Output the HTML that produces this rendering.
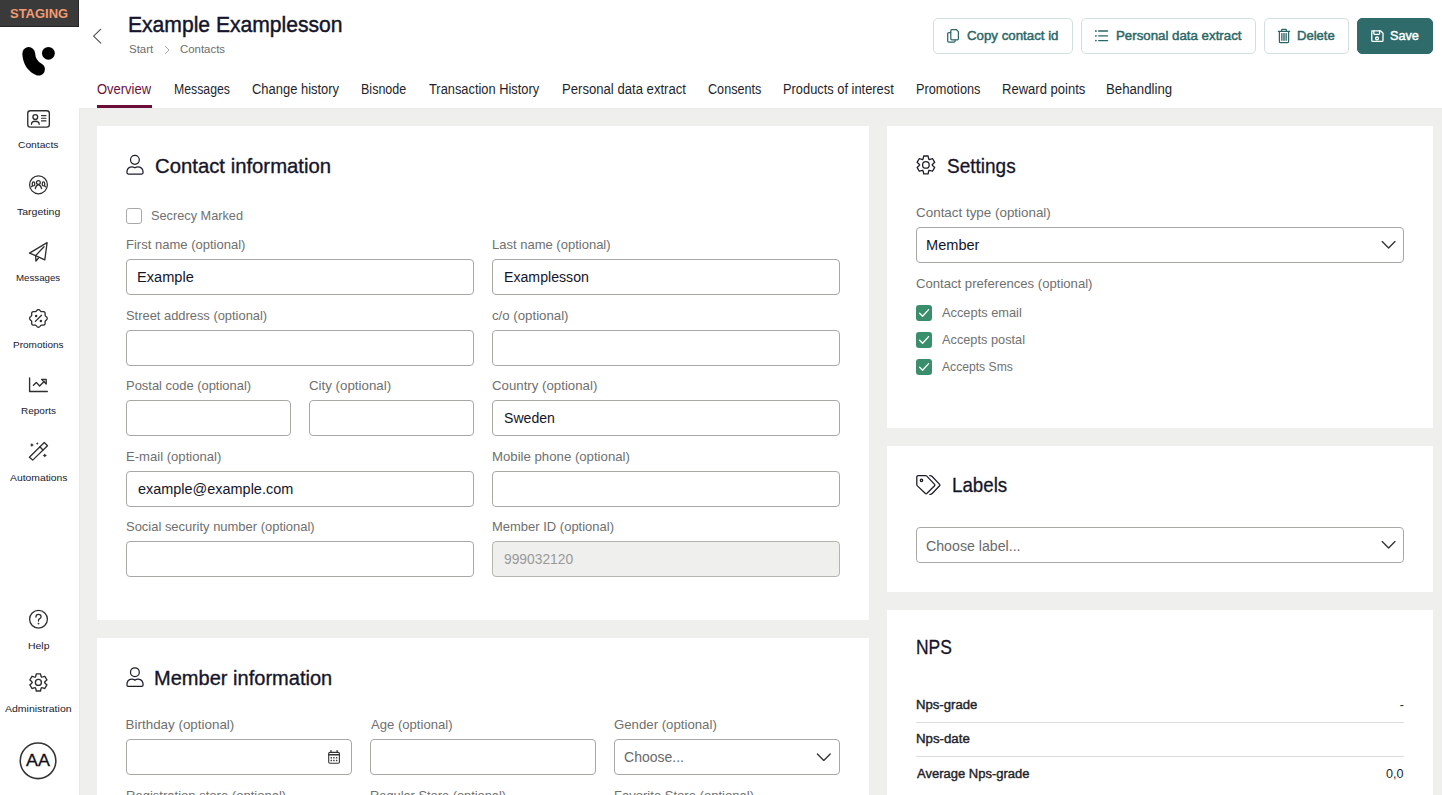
<!DOCTYPE html>
<html><head><meta charset="utf-8">
<style>
*{box-sizing:border-box;margin:0;padding:0}
html,body{width:1442px;height:795px;overflow:hidden;background:#fff;font-family:"Liberation Sans",sans-serif}
.t{position:absolute;white-space:nowrap;transform-origin:0 0}
.b{position:absolute}
.card{position:absolute;background:#fff}
.inp{position:absolute;height:36px;border:1px solid #a8a8a4;border-radius:4px;background:#fff}
.btn{position:absolute;top:18px;height:36px;border:1px solid #d3dfde;border-radius:5px;background:#fff}
.cb{position:absolute;width:16px;height:16px;border-radius:3px;background:#3a8e6c}
</style></head><body>
<div class="b" style="left:0;top:0;width:79px;height:27px;background:#3a3a3a;border-right:1px solid #252525;border-bottom:1px solid #252525"></div>
<div class="b" style="left:79px;top:108px;width:1363px;height:687px;background:#efefed;border-left:1px solid #eaeae8;border-top:1px solid #eaeae8"></div>
<div class="b" style="left:97px;top:105px;width:55px;height:3px;background:#6b0f3a"></div>
<div class="btn" style="left:933px;width:140px"></div>
<div class="btn" style="left:1081px;width:175px"></div>
<div class="btn" style="left:1264px;width:85px"></div>
<div class="btn" style="left:1357px;width:76px;background:#2f6b6a;border-color:#2f6b6a"></div>

<!-- cards -->
<div class="card" style="left:97px;top:126px;width:772px;height:494px"></div>
<div class="card" style="left:97px;top:638px;width:772px;height:200px"></div>
<div class="card" style="left:887px;top:126px;width:546px;height:302px"></div>
<div class="card" style="left:887px;top:446px;width:546px;height:146px"></div>
<div class="card" style="left:887px;top:610px;width:546px;height:200px"></div>
<!-- contact info inputs -->
<div class="b" style="left:126px;top:208px;width:16px;height:16px;border:1px solid #a8a8a4;border-radius:3px"></div>
<div class="inp" style="left:126px;top:259px;width:348px"></div>
<div class="inp" style="left:492px;top:259px;width:348px"></div>
<div class="inp" style="left:126px;top:330px;width:348px"></div>
<div class="inp" style="left:492px;top:330px;width:348px"></div>
<div class="inp" style="left:126px;top:400px;width:165px"></div>
<div class="inp" style="left:309px;top:400px;width:165px"></div>
<div class="inp" style="left:492px;top:400px;width:348px"></div>
<div class="inp" style="left:126px;top:471px;width:348px"></div>
<div class="inp" style="left:492px;top:471px;width:348px"></div>
<div class="inp" style="left:126px;top:541px;width:348px"></div>
<div class="inp" style="left:492px;top:541px;width:348px;background:#efefed;border-color:#b4b4b0"></div>
<!-- member info -->
<div class="inp" style="left:126px;top:739px;width:226px"></div>
<div class="inp" style="left:370px;top:739px;width:226px"></div>
<div class="inp" style="left:614px;top:739px;width:226px"></div>
<!-- settings -->
<div class="inp" style="left:916px;top:227px;width:488px"></div>
<div class="cb" style="left:916px;top:305px"></div>
<div class="cb" style="left:916px;top:332px"></div>
<div class="cb" style="left:916px;top:359px"></div>
<!-- labels -->
<div class="inp" style="left:916px;top:527px;width:488px"></div>
<!-- nps lines -->
<div class="b" style="left:916px;top:722px;width:488px;height:1px;background:#dcdcdc"></div>
<div class="b" style="left:916px;top:756px;width:488px;height:1px;background:#dcdcdc"></div>

<div class="t" style="left:9.55px;top:8.00px;font-size:12.8px;line-height:12.8px;color:#f59a72;font-weight:700;transform:scaleX(1.0129);">STAGING</div><div class="t" style="left:128.01px;top:13.00px;font-size:22.8px;line-height:22.8px;color:#14142a;-webkit-text-stroke:0.45px #14142a;transform:scaleX(0.9253);">Example Examplesson</div><div class="t" style="left:129.33px;top:44.00px;font-size:11px;line-height:11px;color:#6d6d6d;transform:scaleX(1.0445);">Start</div><div class="t" style="left:179.84px;top:44.00px;font-size:11px;line-height:11px;color:#6d6d6d;transform:scaleX(1.0381);">Contacts</div><div class="t" style="left:97.06px;top:82.00px;font-size:14px;line-height:14px;color:#6b0f3a;transform:scaleX(0.9259);">Overview</div><div class="t" style="left:174.01px;top:82.00px;font-size:14px;line-height:14px;color:#1f1f2b;transform:scaleX(0.8764);">Messages</div><div class="t" style="left:251.91px;top:82.00px;font-size:14px;line-height:14px;color:#1f1f2b;transform:scaleX(0.9244);">Change history</div><div class="t" style="left:361.18px;top:82.00px;font-size:14px;line-height:14px;color:#1f1f2b;transform:scaleX(0.8943);">Bisnode</div><div class="t" style="left:429.37px;top:82.00px;font-size:14px;line-height:14px;color:#1f1f2b;transform:scaleX(0.9177);">Transaction History</div><div class="t" style="left:561.53px;top:82.00px;font-size:14px;line-height:14px;color:#1f1f2b;transform:scaleX(0.9369);">Personal data extract</div><div class="t" style="left:708.13px;top:82.00px;font-size:14px;line-height:14px;color:#1f1f2b;transform:scaleX(0.9018);">Consents</div><div class="t" style="left:782.56px;top:82.00px;font-size:14px;line-height:14px;color:#1f1f2b;transform:scaleX(0.9180);">Products of interest</div><div class="t" style="left:915.76px;top:82.00px;font-size:14px;line-height:14px;color:#1f1f2b;transform:scaleX(0.9106);">Promotions</div><div class="t" style="left:1001.64px;top:82.00px;font-size:14px;line-height:14px;color:#1f1f2b;transform:scaleX(0.9317);">Reward points</div><div class="t" style="left:1106.12px;top:82.00px;font-size:14px;line-height:14px;color:#1f1f2b;transform:scaleX(0.9441);">Behandling</div><div class="t" style="left:966.81px;top:30.00px;font-size:12.6px;line-height:12.6px;color:#2b6766;-webkit-text-stroke:0.45px #2b6766;transform:scaleX(1.0540);">Copy contact id</div><div class="t" style="left:1115.72px;top:30.00px;font-size:12.6px;line-height:12.6px;color:#2b6766;-webkit-text-stroke:0.45px #2b6766;transform:scaleX(1.0543);">Personal data extract</div><div class="t" style="left:1296.73px;top:30.00px;font-size:12.6px;line-height:12.6px;color:#2b6766;-webkit-text-stroke:0.45px #2b6766;transform:scaleX(1.0348);">Delete</div><div class="t" style="left:1389.79px;top:30.00px;font-size:12.6px;line-height:12.6px;color:#ffffff;-webkit-text-stroke:0.45px #ffffff;transform:scaleX(1.0068);">Save</div><div class="t" style="left:18.27px;top:140.00px;font-size:9.8px;line-height:9.8px;color:#20202c;transform:scaleX(1.0464);">Contacts</div><div class="t" style="left:17.00px;top:207.00px;font-size:9.8px;line-height:9.8px;color:#20202c;transform:scaleX(1.0733);">Targeting</div><div class="t" style="left:16.34px;top:273.00px;font-size:9.8px;line-height:9.8px;color:#20202c;transform:scaleX(0.9889);">Messages</div><div class="t" style="left:13.32px;top:340.00px;font-size:9.8px;line-height:9.8px;color:#20202c;transform:scaleX(1.0209);">Promotions</div><div class="t" style="left:20.82px;top:406.00px;font-size:9.8px;line-height:9.8px;color:#20202c;transform:scaleX(1.0207);">Reports</div><div class="t" style="left:9.88px;top:473.00px;font-size:9.8px;line-height:9.8px;color:#20202c;transform:scaleX(1.0561);">Automations</div><div class="t" style="left:27.58px;top:641.00px;font-size:9.8px;line-height:9.8px;color:#20202c;transform:scaleX(1.0636);">Help</div><div class="t" style="left:5.38px;top:704.00px;font-size:9.8px;line-height:9.8px;color:#20202c;transform:scaleX(1.0723);">Administration</div><div class="t" style="left:26.49px;top:752.00px;font-size:17px;line-height:17px;color:#111118;-webkit-text-stroke:0.3px #111118;transform:scaleX(1.0530);">AA</div><div class="t" style="left:154.50px;top:155.00px;font-size:21px;line-height:21px;color:#15152a;-webkit-text-stroke:0.35px #15152a;transform:scaleX(0.9670);">Contact information</div><div class="t" style="left:150.90px;top:209.00px;font-size:13.6px;line-height:13.6px;color:#717171;transform:scaleX(0.9366);">Secrecy Marked</div><div class="t" style="left:125.74px;top:238.00px;font-size:13.4px;line-height:13.4px;color:#6f6f6f;transform:scaleX(0.9726);">First name (optional)</div><div class="t" style="left:492.14px;top:238.00px;font-size:13.4px;line-height:13.4px;color:#6f6f6f;transform:scaleX(0.9715);">Last name (optional)</div><div class="t" style="left:126.08px;top:309.00px;font-size:13.4px;line-height:13.4px;color:#6f6f6f;transform:scaleX(0.9625);">Street address (optional)</div><div class="t" style="left:492.38px;top:309.00px;font-size:13.4px;line-height:13.4px;color:#6f6f6f;transform:scaleX(0.9881);">c/o (optional)</div><div class="t" style="left:125.75px;top:379.00px;font-size:13.4px;line-height:13.4px;color:#6f6f6f;transform:scaleX(0.9659);">Postal code (optional)</div><div class="t" style="left:309.19px;top:379.00px;font-size:13.4px;line-height:13.4px;color:#6f6f6f;transform:scaleX(0.9940);">City (optional)</div><div class="t" style="left:492.29px;top:379.00px;font-size:13.4px;line-height:13.4px;color:#6f6f6f;transform:scaleX(0.9893);">Country (optional)</div><div class="t" style="left:125.73px;top:450.00px;font-size:13.4px;line-height:13.4px;color:#6f6f6f;transform:scaleX(0.9775);">E-mail (optional)</div><div class="t" style="left:491.83px;top:450.00px;font-size:13.4px;line-height:13.4px;color:#6f6f6f;transform:scaleX(0.9853);">Mobile phone (optional)</div><div class="t" style="left:126.07px;top:520.00px;font-size:13.4px;line-height:13.4px;color:#6f6f6f;transform:scaleX(0.9676);">Social security number (optional)</div><div class="t" style="left:491.84px;top:520.00px;font-size:13.4px;line-height:13.4px;color:#6f6f6f;transform:scaleX(0.9701);">Member ID (optional)</div><div class="t" style="left:137.24px;top:269.00px;font-size:15.4px;line-height:15.4px;color:#15152a;transform:scaleX(0.9496);">Example</div><div class="t" style="left:503.98px;top:269.00px;font-size:15.4px;line-height:15.4px;color:#15152a;transform:scaleX(0.9191);">Examplesson</div><div class="t" style="left:503.69px;top:410.00px;font-size:15.4px;line-height:15.4px;color:#15152a;transform:scaleX(0.9154);">Sweden</div><div class="t" style="left:137.55px;top:481.00px;font-size:15.4px;line-height:15.4px;color:#15152a;transform:scaleX(0.9388);">example@example.com</div><div class="t" style="left:503.81px;top:551.00px;font-size:15.4px;line-height:15.4px;color:#9a9a9a;transform:scaleX(0.8978);">999032120</div><div class="t" style="left:153.84px;top:667.00px;font-size:21px;line-height:21px;color:#15152a;-webkit-text-stroke:0.35px #15152a;transform:scaleX(0.9545);">Member information</div><div class="t" style="left:125.61px;top:718.00px;font-size:13.4px;line-height:13.4px;color:#6f6f6f;">Birthday (optional)</div><div class="t" style="left:370.58px;top:718.00px;font-size:13.4px;line-height:13.4px;color:#6f6f6f;transform:scaleX(0.9780);">Age (optional)</div><div class="t" style="left:614.00px;top:718.00px;font-size:13.4px;line-height:13.4px;color:#6f6f6f;transform:scaleX(0.9863);">Gender (optional)</div><div class="t" style="left:623.98px;top:749.00px;font-size:15.4px;line-height:15.4px;color:#6a6a6a;transform:scaleX(0.9111);">Choose...</div><div class="t" style="left:125.64px;top:789.00px;font-size:13.4px;line-height:13.4px;color:#6f6f6f;transform:scaleX(0.9739);">Registration store (optional)</div><div class="t" style="left:369.76px;top:789.00px;font-size:13.4px;line-height:13.4px;color:#6f6f6f;transform:scaleX(0.9570);">Regular Store (optional)</div><div class="t" style="left:613.54px;top:789.00px;font-size:13.4px;line-height:13.4px;color:#6f6f6f;transform:scaleX(0.9746);">Favorite Store (optional)</div><div class="t" style="left:946.50px;top:155.00px;font-size:21px;line-height:21px;color:#15152a;-webkit-text-stroke:0.3px #15152a;transform:scaleX(0.9051);">Settings</div><div class="t" style="left:916.09px;top:206.00px;font-size:13.4px;line-height:13.4px;color:#6f6f6f;">Contact type (optional)</div><div class="t" style="left:925.75px;top:237.00px;font-size:15.4px;line-height:15.4px;color:#15152a;transform:scaleX(0.9467);">Member</div><div class="t" style="left:916.10px;top:277.00px;font-size:13.4px;line-height:13.4px;color:#6f6f6f;transform:scaleX(0.9798);">Contact preferences (optional)</div><div class="t" style="left:941.50px;top:306.00px;font-size:13.6px;line-height:13.6px;color:#717171;transform:scaleX(0.9432);">Accepts email</div><div class="t" style="left:941.50px;top:333.00px;font-size:13.6px;line-height:13.6px;color:#717171;transform:scaleX(0.9389);">Accepts postal</div><div class="t" style="left:941.51px;top:360.00px;font-size:13.6px;line-height:13.6px;color:#717171;transform:scaleX(0.8926);">Accepts Sms</div><div class="t" style="left:951.52px;top:474.00px;font-size:21px;line-height:21px;color:#15152a;-webkit-text-stroke:0.3px #15152a;transform:scaleX(0.8913);">Labels</div><div class="t" style="left:926.27px;top:538.00px;font-size:15.4px;line-height:15.4px;color:#6a6a6a;transform:scaleX(0.9209);">Choose label...</div><div class="t" style="left:915.51px;top:636.00px;font-size:21px;line-height:21px;color:#15152a;-webkit-text-stroke:0.3px #15152a;transform:scaleX(0.8302);">NPS</div><div class="t" style="left:915.99px;top:699.00px;font-size:12.5px;line-height:12.5px;color:#1f1f2a;-webkit-text-stroke:0.4px #1f1f2a;transform:scaleX(1.0508);">Nps-grade</div><div class="t" style="left:915.98px;top:733.00px;font-size:12.5px;line-height:12.5px;color:#1f1f2a;-webkit-text-stroke:0.4px #1f1f2a;transform:scaleX(1.0607);">Nps-date</div><div class="t" style="left:916.93px;top:768.00px;font-size:12.5px;line-height:12.5px;color:#1f1f2a;-webkit-text-stroke:0.4px #1f1f2a;transform:scaleX(1.0404);">Average Nps-grade</div><div class="t" style="left:1399.87px;top:699.00px;font-size:12.5px;line-height:12.5px;color:#1f1f2a;">-</div><div class="t" style="left:1386.16px;top:768.00px;font-size:12.5px;line-height:12.5px;color:#1f1f2a;transform:scaleX(1.0111);">0,0</div>
<svg width="1442" height="795" style="position:absolute;left:0;top:0;pointer-events:none" fill="none" stroke-linecap="round" stroke-linejoin="round">
<path d="M28.7 53.5 Q29.5 65 38.6 69.2" stroke="#000" stroke-width="12.8"/><circle cx="48.4" cy="53.3" r="6.4" fill="#000"/>
<path d="M100.8 29.2 L93.6 36.2 L100.8 43.2" stroke="#4a4a4a" stroke-width="1.05"/>
<path d="M165.5 46.5 L169 50 L165.5 53.5" stroke="#a0a0a0" stroke-width="0.95"/>
<g stroke="#2e2e2e" stroke-width="1.35"><rect x="27.75" y="110.75" width="21.6" height="16.4" rx="2.6"/><circle cx="35.3" cy="117" r="2.4"/><path d="M31.5 124.2 Q31.5 121.2 35.3 121.2 Q39.2 121.2 39.2 124.2"/><path d="M41.5 115.6 H46 M41.5 118.3 H46 M41.5 120.9 H46" stroke-width="1.1"/></g>
<g stroke="#2e2e2e" stroke-width="1.25"><circle cx="38.5" cy="184.85" r="8.9"/><circle cx="38.4" cy="182.4" r="1.9"/><path d="M35.3 188.6 Q36 185.2 38.4 184.6 Q40.8 185.2 41.6 188.6"/><path d="M32.3 185.4 V183.3 Q32.3 181.9 33.5 181.9 Q34.7 181.9 34.7 183.3 V185.2"/><path d="M42.3 185.2 V183.3 Q42.3 181.9 43.5 181.9 Q44.7 181.9 44.7 183.3 V185.4"/><path d="M31.3 186.9 Q32.3 185.6 34.4 185.6 M42.6 185.6 Q44.7 185.6 45.7 186.9" stroke-width="1.1"/></g>
<g stroke="#2e2e2e" stroke-width="1.3"><path d="M47.1 242.6 L29.5 253.1 L35.6 255.6 L44.8 259.9 Z"/><path d="M35.6 255.6 L44 246.8"/><path d="M35.6 255.6 L35.9 261 L38.4 258.2"/></g>
<g stroke="#2e2e2e" stroke-width="1.3"><path d="M47.25 318.40 L47.13 318.97 L46.80 319.51 L46.34 319.98 L45.86 320.40 L45.46 320.79 L45.19 321.21 L45.08 321.70 L45.09 322.26 L45.13 322.90 L45.12 323.56 L44.98 324.17 L44.66 324.66 L44.17 324.98 L43.56 325.12 L42.90 325.13 L42.26 325.09 L41.70 325.08 L41.21 325.19 L40.79 325.46 L40.40 325.86 L39.98 326.34 L39.51 326.80 L38.97 327.13 L38.40 327.25 L37.83 327.13 L37.29 326.80 L36.82 326.34 L36.40 325.86 L36.01 325.46 L35.59 325.19 L35.10 325.08 L34.54 325.09 L33.90 325.13 L33.24 325.12 L32.63 324.98 L32.14 324.66 L31.82 324.17 L31.68 323.56 L31.67 322.90 L31.71 322.26 L31.72 321.70 L31.61 321.21 L31.34 320.79 L30.94 320.40 L30.46 319.98 L30.00 319.51 L29.67 318.97 L29.55 318.40 L29.67 317.83 L30.00 317.29 L30.46 316.82 L30.94 316.40 L31.34 316.01 L31.61 315.59 L31.72 315.10 L31.71 314.54 L31.67 313.90 L31.68 313.24 L31.82 312.63 L32.14 312.14 L32.63 311.82 L33.24 311.68 L33.90 311.67 L34.54 311.71 L35.10 311.72 L35.59 311.61 L36.01 311.34 L36.40 310.94 L36.82 310.46 L37.29 310.00 L37.83 309.67 L38.40 309.55 L38.97 309.67 L39.51 310.00 L39.98 310.46 L40.40 310.94 L40.79 311.34 L41.21 311.61 L41.70 311.72 L42.26 311.71 L42.90 311.67 L43.56 311.68 L44.17 311.82 L44.66 312.14 L44.98 312.63 L45.12 313.24 L45.13 313.90 L45.09 314.54 L45.08 315.10 L45.19 315.59 L45.46 316.01 L45.86 316.40 L46.34 316.82 L46.80 317.29 L47.13 317.83Z"/><path d="M35.4 321.4 L41.5 315.2"/></g><circle cx="36.1" cy="316" r="1.25" fill="#2e2e2e"/><circle cx="40.9" cy="320.9" r="1.25" fill="#2e2e2e"/>
<g stroke="#2e2e2e" stroke-width="1.35"><path d="M29.6 377.8 V391.5 H47.3"/><path d="M33.4 385.3 L36.3 382.4 L39.6 386 L44.3 381.3"/><path d="M41.6 379.4 H46.2 V384.1 Z"/></g>
<g stroke="#2e2e2e" stroke-width="1.3"><path d="M29.4 457.2 L32.7 460.1 L47.5 445.7 L44.3 442.5 Z"/><path d="M39.8 446.8 L43 450"/></g><g fill="#2e2e2e"><path d="M31.9 443.1 L32.6 444.3 L33.8 445 L32.6 445.7 L31.9 446.9 L31.2 445.7 L30 445 L31.2 444.3Z"/><path d="M37.3 442.2 L37.8 443.1 L38.7 443.6 L37.8 444.1 L37.3 445 L36.8 444.1 L35.9 443.6 L36.8 443.1Z"/><path d="M44.8 453.4 L45.6 454.7 L46.9 455.5 L45.6 456.3 L44.8 457.6 L44 456.3 L42.7 455.5 L44 454.7Z"/></g>
<circle cx="38.05" cy="760.8" r="17.8" stroke="#333" stroke-width="1.55"/>
<g stroke="#2e2e2e" stroke-width="1.3"><circle cx="38.5" cy="619.25" r="8.9"/><path d="M35.9 617 Q35.9 614.3 38.5 614.3 Q41.1 614.3 41.1 616.6 Q41.1 618.2 39.4 618.9 Q38.5 619.3 38.5 620.6 V621"/></g><circle cx="38.5" cy="623.6" r="0.9" fill="#2e2e2e"/>
<g stroke="#2e2e2e" stroke-width="1.35"><path d="M40.90 675.80 L40.50 673.80 L36.30 673.80 L35.90 675.80 L35.35 677.12 L33.93 676.93 L32.00 676.28 L29.90 679.92 L31.43 681.27 L32.30 682.40 L31.43 683.53 L29.90 684.88 L32.00 688.52 L33.93 687.87 L35.35 687.68 L35.90 689.00 L36.30 691.00 L40.50 691.00 L40.90 689.00 L41.45 687.68 L42.87 687.87 L44.80 688.52 L46.90 684.88 L45.37 683.53 L44.50 682.40 L45.37 681.27 L46.90 679.92 L44.80 676.28 L42.87 676.93 L41.45 677.12Z"/><circle cx="38.4" cy="682.4" r="3"/></g>
<g stroke="#2b6766" stroke-width="1.25"><path d="M950.6 32.5 H948.8 Q947.7 32.5 947.7 33.6 V41 Q947.7 42.1 948.8 42.1 H954 Q955.1 42.1 955.1 41 V40.2"/><path d="M951.9 29.7 H956.5 L958.4 31.6 V38.8 Q958.4 39.9 957.3 39.9 H951.9 Q950.8 39.9 950.8 38.8 V30.8 Q950.8 29.7 951.9 29.7Z"/></g>
<g stroke="#2b6766" stroke-width="1.3"><path d="M1098.6 31 H1107.6 M1098.6 35.8 H1107.6 M1098.6 40.6 H1107.6"/></g><g fill="#2b6766"><circle cx="1095.9" cy="31" r="0.9"/><circle cx="1095.9" cy="35.8" r="0.9"/><circle cx="1095.9" cy="40.6" r="0.9"/></g>
<g stroke="#2b6766" stroke-width="1.25"><path d="M1278.4 31.4 H1289.6"/><path d="M1281.6 31.2 V30 Q1281.6 29.3 1282.4 29.3 H1285.6 Q1286.4 29.3 1286.4 30 V31.2"/><path d="M1279.4 31.6 V41.8 Q1279.4 42.6 1280.2 42.6 H1287.8 Q1288.6 42.6 1288.6 41.8 V31.6"/><path d="M1281.6 33.5 V40.4 M1283 33.5 V40.4 M1284 33.5 V40.4 M1285 33.5 V40.4 M1286.4 33.5 V40.4" stroke-width="0.9"/></g>
<g stroke="#fff" stroke-width="1.3"><path d="M1371.8 30.8 H1380.5 L1383 33.3 V40.4 Q1383 41.4 1382 41.4 H1372.8 Q1371.8 41.4 1371.8 40.4 V31.8 Q1371.8 30.8 1372.8 30.8"/><path d="M1373.8 31 V33.6 Q1373.8 34.4 1374.6 34.4 H1378.8 Q1379.6 34.4 1379.6 33.6 V31"/><circle cx="1377" cy="38.4" r="1.4"/></g>
<g stroke="#1e1e2a" stroke-width="1.25" transform="translate(0 0)"><circle cx="134.9" cy="159.85" r="4.4"/><path d="M126.9 172.6 Q126.9 167.2 131.6 166.9 Q133.3 166.8 134.9 167.8 Q136.5 166.8 138.2 166.9 Q143.1 167.2 143.1 172.6 Q143.1 174 141.7 174 H128.3 Q126.9 174 126.9 172.6Z"/></g>
<g stroke="#1e1e2a" stroke-width="1.25" transform="translate(0 512.3)"><circle cx="134.9" cy="159.85" r="4.4"/><path d="M126.9 172.6 Q126.9 167.2 131.6 166.9 Q133.3 166.8 134.9 167.8 Q136.5 166.8 138.2 166.9 Q143.1 167.2 143.1 172.6 Q143.1 174 141.7 174 H128.3 Q126.9 174 126.9 172.6Z"/></g>
<g stroke="#1e1e2a" stroke-width="1.3"><path d="M928.50 158.10 L928.10 156.00 L923.70 156.00 L923.30 158.10 L922.80 159.53 L921.31 159.25 L919.29 158.54 L917.09 162.36 L918.71 163.75 L919.70 164.90 L918.71 166.05 L917.09 167.44 L919.29 171.26 L921.31 170.55 L922.80 170.27 L923.30 171.70 L923.70 173.80 L928.10 173.80 L928.50 171.70 L929.00 170.27 L930.49 170.55 L932.51 171.26 L934.71 167.44 L933.09 166.05 L932.10 164.90 L933.09 163.75 L934.71 162.36 L932.51 158.54 L930.49 159.25 L929.00 159.53Z"/><circle cx="925.9" cy="164.9" r="3.3"/></g>
<g stroke="#1e1e2a" stroke-width="1.3"><path d="M918.2 475.6 H925.6 Q926.3 475.6 926.8 476.1 L934.6 484.4 Q935.2 485.1 934.6 485.8 L926.8 493.5 Q926.1 494.1 925.4 493.5 L917.4 485.9 Q916.8 485.3 916.8 484.6 V477 Q916.8 475.6 918.2 475.6Z"/><path d="M929.8 475.7 Q931.3 475.6 932.2 476.5 L939.6 484.4 Q940.3 485.1 939.6 485.8 L932.2 493.5 Q931.3 494.4 929.8 494.3"/><circle cx="921.5" cy="480.3" r="1.2"/></g>
<g stroke="#333" stroke-width="1.1"><rect x="328.7" y="752.4" width="10.7" height="10.8" rx="1.2"/><path d="M328.9 754.7 H339.2" stroke-width="1.4"/><path d="M331 750.6 V752 M337.1 750.6 V752" stroke-width="1.3"/></g><g fill="#333"><rect x="330.6" y="757.1" width="1.4" height="1.4"/><rect x="333.2" y="757.1" width="1.4" height="1.4"/><rect x="335.9" y="757.1" width="1.4" height="1.4"/><rect x="330.6" y="759.8" width="1.4" height="1.4"/><rect x="333.2" y="759.8" width="1.4" height="1.4"/><rect x="335.9" y="759.8" width="1.4" height="1.4"/></g>
<path d="M1382.2 241.6 L1388.6000000000001 248.0 L1395.0 241.6" stroke="#333" stroke-width="1.35"/>
<path d="M1382.2 541.6 L1388.6000000000001 548.0 L1395.0 541.6" stroke="#333" stroke-width="1.35"/>
<path d="M817.4 754 L823.8 760.4 L830.1999999999999 754" stroke="#333" stroke-width="1.35"/>
<path d="M919.6 313.2 L922.6 316.2 L928.6 309.6" stroke="#fff" stroke-width="1.3"/>
<path d="M919.6 340.2 L922.6 343.2 L928.6 336.6" stroke="#fff" stroke-width="1.3"/>
<path d="M919.6 367.2 L922.6 370.2 L928.6 363.6" stroke="#fff" stroke-width="1.3"/>
</svg>
</body></html>
